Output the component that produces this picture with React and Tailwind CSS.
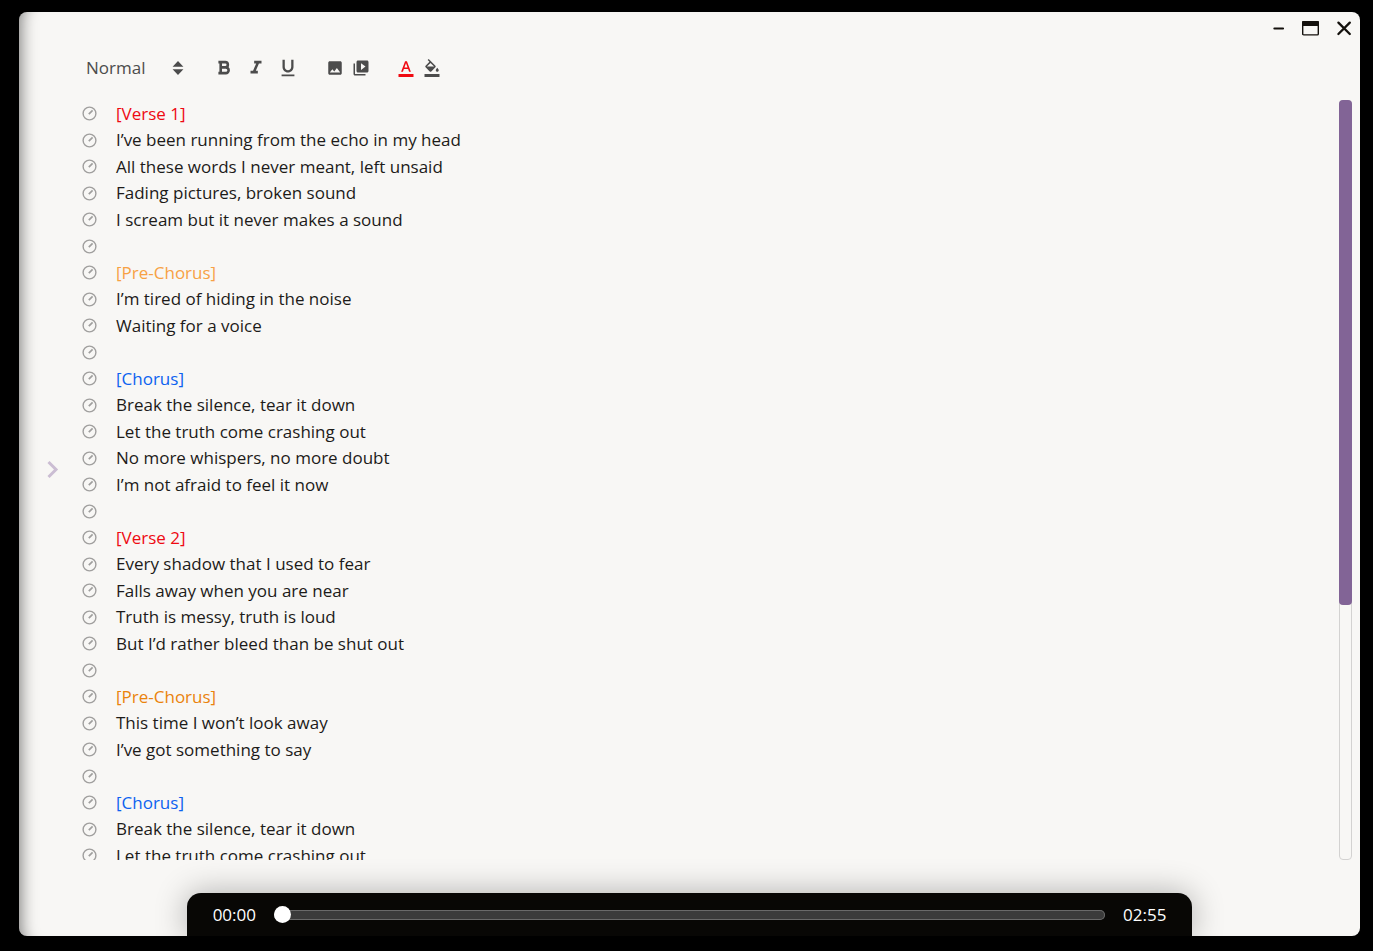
import { useState } from 'react'
import {
  MdFormatItalic,
  MdFormatUnderlined,
  MdImage,
  MdVideoLibrary,
  MdFormatColorText,
  MdFormatColorFill,
} from 'react-icons/md'

const lyrics = [
  { text: '[Verse 1]', color: 'text-[#ee0a12]' },
  { text: 'I’ve been running from the echo in my head' },
  { text: 'All these words I never meant, left unsaid' },
  { text: 'Fading pictures, broken sound' },
  { text: 'I scream but it never makes a sound' },
  { text: '' },
  { text: '[Pre-Chorus]', color: 'text-[#f7a144]' },
  { text: 'I’m tired of hiding in the noise' },
  { text: 'Waiting for a voice' },
  { text: '' },
  { text: '[Chorus]', color: 'text-[#0c62f0]' },
  { text: 'Break the silence, tear it down' },
  { text: 'Let the truth come crashing out' },
  { text: 'No more whispers, no more doubt' },
  { text: 'I’m not afraid to feel it now' },
  { text: '' },
  { text: '[Verse 2]', color: 'text-[#ee0a12]' },
  { text: 'Every shadow that I used to fear' },
  { text: 'Falls away when you are near' },
  { text: 'Truth is messy, truth is loud' },
  { text: 'But I’d rather bleed than be shut out' },
  { text: '' },
  { text: '[Pre-Chorus]', color: 'text-[#ea830c]' },
  { text: 'This time I won’t look away' },
  { text: 'I’ve got something to say' },
  { text: '' },
  { text: '[Chorus]', color: 'text-[#0c62f0]' },
  { text: 'Break the silence, tear it down' },
  { text: 'Let the truth come crashing out' },
]

function TitleBar() {
  return (
    <header className="flex h-8 shrink-0 items-center justify-end gap-4 pr-2 text-[#14110d]">
      <button type="button" aria-label="Minimize">
        <svg className="h-4 w-3" viewBox="0 0 12 16" fill="none" stroke="currentColor" strokeWidth="2.2" strokeLinecap="round">
          <path d="M1.4 8.5h8.6" />
        </svg>
      </button>
      <button type="button" aria-label="Maximize">
        <svg className="h-4 w-[19px]" viewBox="0 0 19 16" fill="none" stroke="currentColor">
          <rect x="1.7" y="1.7" width="15.6" height="13.2" rx="1" strokeWidth="1.4" />
          <path d="M2 1h15a1 1 0 011 1v4H1V2a1 1 0 011-1z" fill="currentColor" stroke="none" />
        </svg>
      </button>
      <button type="button" aria-label="Close">
        <svg className="h-4 w-4" viewBox="0 0 16 16" fill="none" stroke="currentColor" strokeWidth="2.3" strokeLinecap="round">
          <path d="M2.4 2.6l11.4 11.4M13.8 2.6L2.4 14" />
        </svg>
      </button>
    </header>
  )
}

function BoldIcon() {
  return (
    <svg className="size-[22px]" viewBox="0 0 22 22" fill="none" stroke="currentColor" strokeWidth="2.6">
      <path d="M5.4 5.1h6.8a2.5 2.5 0 010 5.3H8h4.8a2.8 2.8 0 010 5.7H5.4M7.7 5v11.2" />
    </svg>
  )
}

function Toolbar() {
  return (
    <div className="flex h-12 shrink-0 items-center pl-1 text-[#4c4c4c]">
      <button type="button" className="flex w-[98px] items-center justify-between text-[17px]">
        Normal
        <svg className="h-4 w-3" viewBox="0 0 12 16" fill="currentColor">
          <path d="M6 1l5.4 5.8H.6zM6 15L.6 9.2h10.8z" />
        </svg>
      </button>
      <div className="ml-[29px] flex items-center gap-[10px]">
        <button type="button" aria-label="Bold"><BoldIcon /></button>
        <button type="button" aria-label="Italic"><MdFormatItalic size={22} /></button>
        <button type="button" aria-label="Underline"><MdFormatUnderlined size={22} /></button>
      </div>
      <div className="ml-[27px] flex items-center gap-2">
        <button type="button" aria-label="Image"><MdImage size={18} /></button>
        <button type="button" aria-label="Video"><MdVideoLibrary size={18} /></button>
      </div>
      <div className="ml-[27px] flex items-center gap-2">
        <button type="button" aria-label="Text color" className="text-[#f00a12]"><MdFormatColorText size={18} /></button>
        <button type="button" aria-label="Highlight color"><MdFormatColorFill size={18} /></button>
      </div>
    </div>
  )
}

function LyricLine({ text, color = 'text-[#1d1b19]' }) {
  return (
    <li className="flex items-center gap-[19px] odd:h-[27px] even:h-[26px]">
      <button type="button" aria-label="Set time" className="text-[#a09f9e]">
        <svg className="size-[15px]" viewBox="0 0 15 15" fill="none" stroke="currentColor" strokeWidth="1.4">
          <circle cx="7.5" cy="7.5" r="6.4" />
          <path d="M6.8 8.2l3.8-3.8" strokeWidth="1.7" />
        </svg>
      </button>
      <span className={`whitespace-nowrap text-[17px] ${color}`}>{text}</span>
    </li>
  )
}

function Player() {
  const [time, setTime] = useState(0)

  return (
    <footer className="mx-auto flex h-[43px] w-3/4 shrink-0 items-center gap-[18px] rounded-t-[14px] bg-[#080705] px-[26px] text-[17px] text-white shadow-[0_0_32px_rgba(0,0,0,0.3)]">
      <span>00:00</span>
      <input
        type="range"
        aria-label="Seek"
        min="0"
        max="175"
        value={time}
        onChange={(e) => setTime(Number(e.target.value))}
        className="h-[10px] min-w-0 flex-1 appearance-none rounded-full bg-[#3b3b3b] inset-ring inset-ring-[#6a6a6a] [&::-webkit-slider-thumb]:size-[17px] [&::-webkit-slider-thumb]:appearance-none [&::-webkit-slider-thumb]:rounded-full [&::-webkit-slider-thumb]:bg-white"
      />
      <span>02:55</span>
    </footer>
  )
}

export default function App() {
  return (
    <div className="h-screen bg-black pt-3 pr-[13px] pb-[15px] pl-[19px] font-['Open_Sans','Noto_Sans',sans-serif]">
      <div className="flex h-full flex-col overflow-hidden rounded-lg bg-[#f8f7f5] shadow-[inset_18px_0_16px_-16px_rgba(0,0,0,0.5)]">
        <TitleBar />
        <div className="flex min-h-0 flex-1">
          <div className="flex w-[63px] shrink-0 items-center pl-7">
            <button type="button" aria-label="Open panel" className="text-[#cbbdd3]">
              <svg className="h-5 w-3" viewBox="0 0 12 20" fill="none" stroke="currentColor" strokeWidth="3">
                <path d="M1.5 3l7.5 7.5L1.5 18" />
              </svg>
            </button>
          </div>
          <main className="flex min-w-0 flex-1 flex-col gap-2 pr-2 pb-[33px]">
            <Toolbar />
            <div className="flex min-h-0 flex-1">
              <ul className="min-w-0 flex-1 overflow-hidden">
                {lyrics.map((line, i) => (
                  <LyricLine key={i} {...line} />
                ))}
              </ul>
              <div className="w-[13px] rounded-[4px] border border-[#d3d2d1]">
                <div className="-mx-px -mt-px h-2/3 rounded-[4px] bg-[#826496]" />
              </div>
            </div>
          </main>
        </div>
        <Player />
      </div>
    </div>
  )
}
